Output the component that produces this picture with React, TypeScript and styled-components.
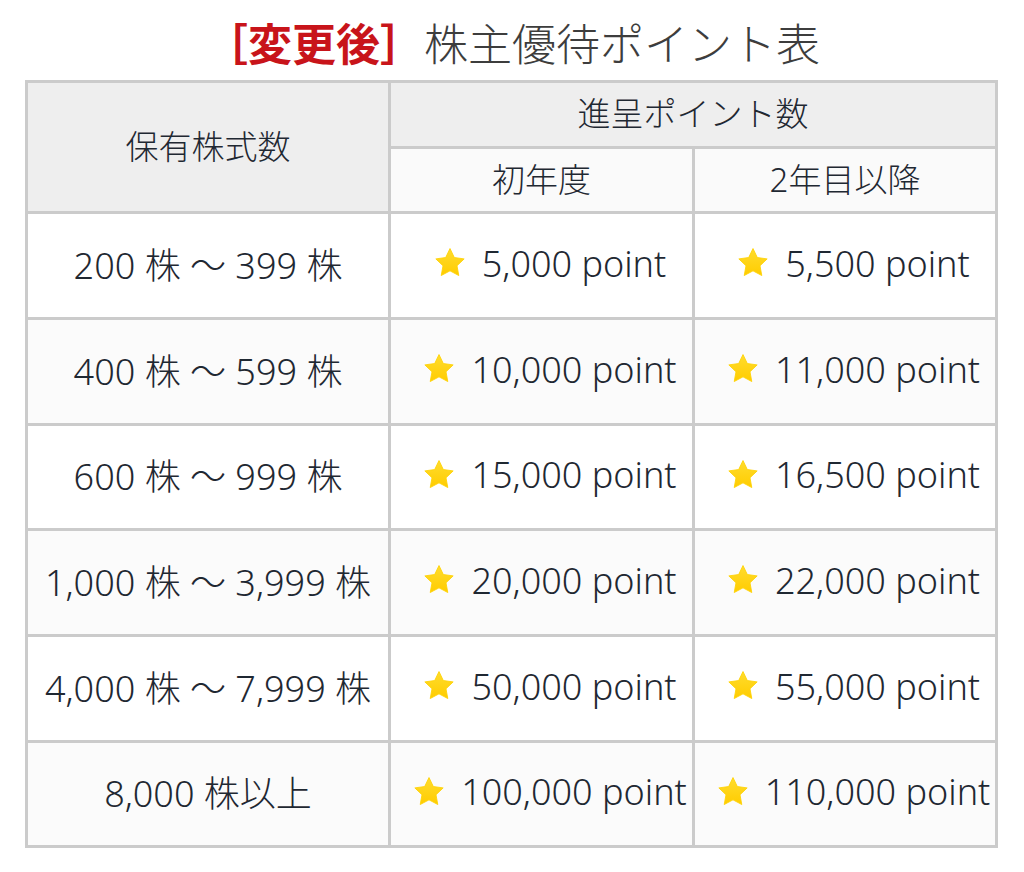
import React from "react";
import styled, { createGlobalStyle } from "styled-components";

const Global = createGlobalStyle`
  html, body { margin: 0; padding: 0; background: #ffffff; }
  body { font-family: "Noto Sans", "Noto Sans CJK JP", sans-serif; }
`;

const Page = styled.div`
  width: 1024px;
  padding-top: 14px;
  display: flex;
  flex-direction: column;
  align-items: flex-start;
`;

const Title = styled.h1`
  align-self: stretch;
  margin: 0 0 6px 0;
  height: 60px;
  line-height: 60px;
  font-size: 44px;
  font-weight: 300;
  text-align: center;
  color: #3d3d3d;
  font-family: "Noto Sans", "Noto Sans CJK JP", sans-serif;
`;

const Tag = styled.span`
  color: #c8141a;
  font-weight: 700;
`;

const Grid = styled.div`
  margin-left: 25px;
  display: grid;
  grid-template-columns: 360px 301px 300px;
  grid-template-rows: 63px 62px 103px 103px 102px 103px 103px 102px;
  gap: 3px;
  padding: 3px;
  background: #cbcbcb;
`;

const BaseCell = styled.div`
  display: flex;
  align-items: center;
  justify-content: center;
  color: #1f2832;
  font-weight: 300;
  white-space: nowrap;
  padding-bottom: 5px;
  box-sizing: border-box;
`;

const HeadCell = styled(BaseCell)<{ $rows?: number; $cols?: number }>`
  background: #eeeeee;
  font-size: 33px;
  grid-row: span ${(p) => p.$rows ?? 1};
  grid-column: span ${(p) => p.$cols ?? 1};
`;

const SubHeadCell = styled(BaseCell)`
  background: #fafafa;
  font-size: 33px;
`;

const Cell = styled(BaseCell)<{ $alt?: boolean }>`
  background: ${(p) => (p.$alt ? "#fbfbfb" : "#ffffff")};
  font-size: 36px;
`;

const PointCell = styled(Cell)`
  padding-left: 16px;
  gap: 15px;
`;

const StarIcon = styled.svg`
  width: 34px;
  height: 34px;
  flex: none;
`;

const Star = () => (
  <StarIcon viewBox="0 0 24 24" aria-hidden="true">
    <defs>
      <linearGradient id="starGrad" x1="0" y1="0" x2="0" y2="1">
        <stop offset="0" stopColor="#FFDC2E" />
        <stop offset="1" stopColor="#FFCC00" />
      </linearGradient>
    </defs>
    <path
      d="M12 1.8l3.05 6.35 6.95.95-5.05 4.85 1.25 6.9L12 17.55l-6.2 3.3 1.25-6.9L2 9.1l6.95-.95L12 1.8z"
      fill="url(#starGrad)"
      stroke="#FFD200"
      strokeWidth="0.6"
      strokeLinejoin="round"
    />
  </StarIcon>
);

const rows = [
  { shares: "200 株 ～ 399 株", first: "5,000", later: "5,500" },
  { shares: "400 株 ～ 599 株", first: "10,000", later: "11,000" },
  { shares: "600 株 ～ 999 株", first: "15,000", later: "16,500" },
  { shares: "1,000 株 ～ 3,999 株", first: "20,000", later: "22,000" },
  { shares: "4,000 株 ～ 7,999 株", first: "50,000", later: "55,000" },
  { shares: "8,000 株以上", first: "100,000", later: "110,000" },
];

export default function App() {
  return (
    <>
      <Global />
      <Page>
        <Title>
          <Tag>［変更後］</Tag>株主優待ポイント表
        </Title>
        <Grid>
          <HeadCell $rows={2}>保有株式数</HeadCell>
          <HeadCell $cols={2}>進呈ポイント数</HeadCell>
          <SubHeadCell>初年度</SubHeadCell>
          <SubHeadCell>2年目以降</SubHeadCell>
          {rows.map((r, i) => (
            <React.Fragment key={r.shares}>
              <Cell $alt={i % 2 === 1}>{r.shares}</Cell>
              <PointCell $alt={i % 2 === 1}>
                <Star />
                <span>{r.first} point</span>
              </PointCell>
              <PointCell $alt={i % 2 === 1}>
                <Star />
                <span>{r.later} point</span>
              </PointCell>
            </React.Fragment>
          ))}
        </Grid>
      </Page>
    </>
  );
}
